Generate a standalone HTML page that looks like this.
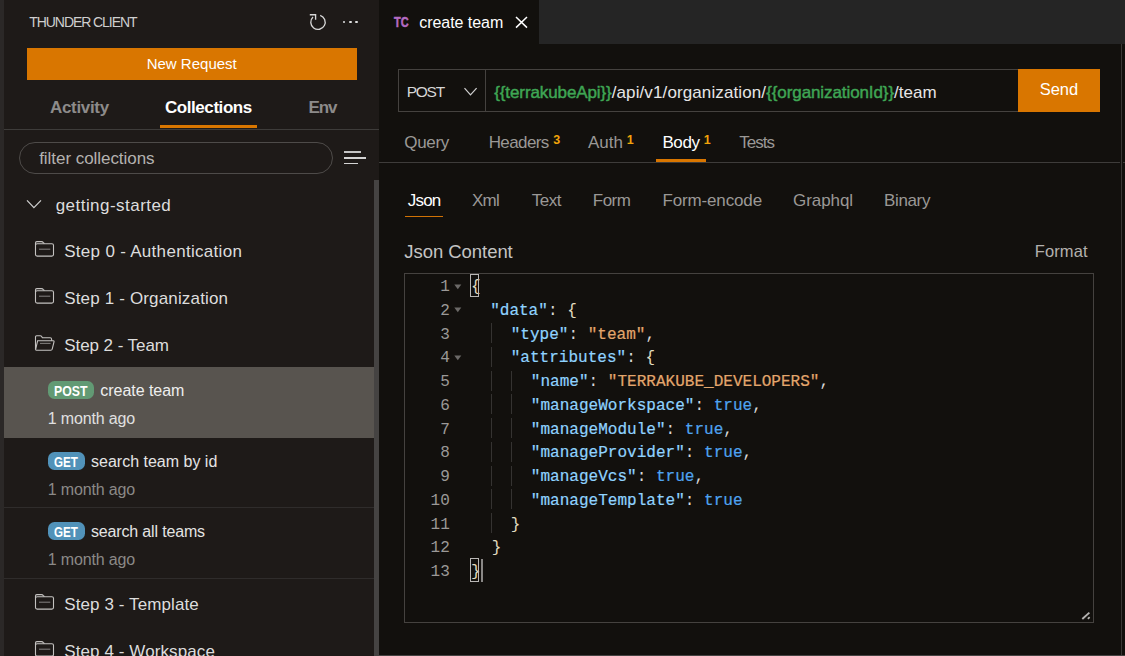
<!DOCTYPE html><html><head><meta charset="utf-8"><title>Thunder Client</title><style>html,body{margin:0;padding:0;background:#12100d;}body{width:1125px;height:656px;position:relative;overflow:hidden;font-family:"Liberation Sans", sans-serif;}body>div,body>span,body>svg{position:absolute;box-sizing:border-box;}span{white-space:pre;}</style></head><body>
<div style="left:0px;top:0px;width:4px;height:656px;background:#2b2827;"></div>
<div style="left:4px;top:0px;width:375px;height:656px;background:#1e1a18;"></div>
<div style="left:379px;top:0px;width:746px;height:656px;background:#12100d;"></div>
<div style="left:379px;top:0px;width:746px;height:44px;background:#252525;"></div>
<div style="left:379px;top:0px;width:160px;height:44px;background:#12100d;"></div>
<span style="left:29.30px;top:15px;font-size:14px;line-height:14px;color:#cfcfcf;letter-spacing:-1.07px;">THUNDER CLIENT</span>
<svg style="left:306px;top:10px" width="24" height="24" viewBox="0 0 24 24" fill="none" stroke="#d6d6d6" stroke-width="1.35"><path d="M7 7 A7.2 7.2 0 1 0 14.2 5.35"/><path d="M3.8 4.7 H9.6 V9.7"/></svg>
<div style="left:342.75px;top:20.65px;width:2.5px;height:2.5px;background:#e0e0e0;border-radius:50%;"></div>
<div style="left:349.15px;top:20.65px;width:2.5px;height:2.5px;background:#e0e0e0;border-radius:50%;"></div>
<div style="left:355.45px;top:20.65px;width:2.5px;height:2.5px;background:#e0e0e0;border-radius:50%;"></div>
<div style="left:27px;top:48px;width:330px;height:32px;background:#d97600;"></div>
<span style="left:146.70px;top:56px;font-size:15px;line-height:15px;color:#fff;">New Request</span>
<span style="left:50.00px;top:99px;font-size:17px;line-height:17px;color:#8d8b8a;font-weight:bold;letter-spacing:-0.32px;">Activity</span>
<span style="left:165.00px;top:99px;font-size:17px;line-height:17px;color:#ffffff;font-weight:bold;letter-spacing:-0.44px;">Collections</span>
<span style="left:308.60px;top:99px;font-size:17px;line-height:17px;color:#8d8b8a;font-weight:bold;letter-spacing:-1.2px;">Env</span>
<div style="left:160px;top:125px;width:97px;height:3px;background:#d97600;"></div>
<div style="left:4px;top:129px;width:375px;height:1px;background:#3e3c3a;"></div>
<div style="left:19px;top:141.6px;width:314px;height:32.4px;border:1px solid #4e4b49;border-radius:16.2px;"></div>
<span style="left:39.20px;top:150px;font-size:17px;line-height:17px;color:#b4b2b0;letter-spacing:-0.05px;">filter collections</span>
<div style="left:344.3px;top:151px;width:16.7px;height:2px;background:#c4c4c4;"></div>
<div style="left:344.3px;top:156.9px;width:21.4px;height:1.7px;background:#d4d4d4;"></div>
<div style="left:344.3px;top:162.6px;width:13.6px;height:1.7px;background:#d4d4d4;"></div>
<div style="left:374px;top:180px;width:5px;height:476px;background:#454342;"></div>
<svg style="left:25px;top:198px" width="18" height="12" viewBox="0 0 18 12" fill="none" stroke="#cfcfcf" stroke-width="1.25"><path d="M2 2.4 L8.9 9.6 L16 2.4"/></svg>
<span style="left:55.70px;top:197px;font-size:17px;line-height:17px;color:#dddddd;letter-spacing:0.46px;">getting-started</span>
<svg style="left:33px;top:239px" width="24" height="20" viewBox="0 0 24 20" fill="none" stroke="#c4c2c0" stroke-width="1.1"><rect x="2.5" y="4.7" width="18" height="12.4" rx="1.6"/><path d="M2.5 6 V3.9 Q2.5 2.6 3.8 2.6 H8.4 Q9.6 2.6 10.4 3.6 L11.4 4.7"/><path d="M6 10.2 H17.3" stroke="#7c7a78"/></svg>
<span style="left:64.20px;top:243px;font-size:17px;line-height:17px;color:#dddddd;letter-spacing:0.3px;">Step 0 - Authentication</span>
<svg style="left:33px;top:286px" width="24" height="20" viewBox="0 0 24 20" fill="none" stroke="#c4c2c0" stroke-width="1.1"><rect x="2.5" y="4.7" width="18" height="12.4" rx="1.6"/><path d="M2.5 6 V3.9 Q2.5 2.6 3.8 2.6 H8.4 Q9.6 2.6 10.4 3.6 L11.4 4.7"/><path d="M6 10.2 H17.3" stroke="#7c7a78"/></svg>
<span style="left:64.20px;top:290px;font-size:17px;line-height:17px;color:#dddddd;letter-spacing:0.16px;">Step 1 - Organization</span>
<svg style="left:33px;top:332.5px" width="24" height="20" viewBox="0 0 24 20" fill="none" stroke="#c4c2c0" stroke-width="1.1"><path d="M2.5 16.5 V3.8 Q2.5 2.8 3.6 2.8 H7.4 Q8.6 2.8 9.4 4.8 H17.2 Q18.6 4.8 18.6 6.2 V7.8" /><path d="M4.6 7.8 H20.4 Q21.2 7.8 21 8.8 L19.2 16.2 Q18.9 17.2 17.8 17.2 H3.4 Q2.4 17.2 2.7 16.2 Z" /><path d="M7 10.4 H17.6" stroke="#7c7a78"/></svg>
<span style="left:64.20px;top:337px;font-size:17px;line-height:17px;color:#dddddd;letter-spacing:-0.06px;">Step 2 - Team</span>
<div style="left:4px;top:367px;width:370px;height:71px;background:#58544f;"></div>
<div style="left:47.8px;top:381px;width:46.2px;height:18px;background:#629a74;border-radius:6.5px;"></div>
<span style="left:54.00px;top:384px;font-size:14px;line-height:14px;color:#ffffff;font-weight:bold;transform:scaleX(0.877);transform-origin:0 0;">POST</span>
<span style="left:100.30px;top:383px;font-size:16px;line-height:16px;color:#eeeeee;letter-spacing:-0.04px;">create team</span>
<span style="left:47.80px;top:411px;font-size:16px;line-height:16px;color:#e0e0e0;letter-spacing:-0.15px;">1 month ago</span>
<div style="left:47.8px;top:452px;width:37.2px;height:18px;background:#5192b9;border-radius:6.5px;"></div>
<span style="left:54.00px;top:455px;font-size:14px;line-height:14px;color:#ffffff;font-weight:bold;transform:scaleX(0.83);transform-origin:0 0;">GET</span>
<span style="left:91.00px;top:454px;font-size:16px;line-height:16px;color:#e4e4e4;">search team by id</span>
<span style="left:47.80px;top:482px;font-size:16px;line-height:16px;color:#8b8987;letter-spacing:-0.15px;">1 month ago</span>
<div style="left:4px;top:507px;width:370px;height:1px;background:#2f2c2b;"></div>
<div style="left:47.8px;top:522.4px;width:37.2px;height:18px;background:#5192b9;border-radius:6.5px;"></div>
<span style="left:54.00px;top:525px;font-size:14px;line-height:14px;color:#ffffff;font-weight:bold;transform:scaleX(0.83);transform-origin:0 0;">GET</span>
<span style="left:91.00px;top:524px;font-size:16px;line-height:16px;color:#e4e4e4;letter-spacing:-0.16px;">search all teams</span>
<span style="left:47.80px;top:552px;font-size:16px;line-height:16px;color:#8b8987;letter-spacing:-0.15px;">1 month ago</span>
<div style="left:4px;top:578px;width:370px;height:1px;background:#2f2c2b;"></div>
<svg style="left:33px;top:592px" width="24" height="20" viewBox="0 0 24 20" fill="none" stroke="#c4c2c0" stroke-width="1.1"><rect x="2.5" y="4.7" width="18" height="12.4" rx="1.6"/><path d="M2.5 6 V3.9 Q2.5 2.6 3.8 2.6 H8.4 Q9.6 2.6 10.4 3.6 L11.4 4.7"/><path d="M6 10.2 H17.3" stroke="#7c7a78"/></svg>
<span style="left:64.20px;top:596px;font-size:17px;line-height:17px;color:#dddddd;letter-spacing:0.1px;">Step 3 - Template</span>
<svg style="left:33px;top:639px" width="24" height="20" viewBox="0 0 24 20" fill="none" stroke="#c4c2c0" stroke-width="1.1"><rect x="2.5" y="4.7" width="18" height="12.4" rx="1.6"/><path d="M2.5 6 V3.9 Q2.5 2.6 3.8 2.6 H8.4 Q9.6 2.6 10.4 3.6 L11.4 4.7"/><path d="M6 10.2 H17.3" stroke="#7c7a78"/></svg>
<span style="left:64.20px;top:643px;font-size:17px;line-height:17px;color:#dddddd;letter-spacing:0.1px;">Step 4 - Workspace</span>
<span style="left:394.30px;top:15px;font-size:14px;line-height:14px;color:#b46bc2;font-weight:bold;transform:scaleX(0.78);transform-origin:0 0;-webkit-text-stroke:0.5px #b46bc2;">TC</span>
<span style="left:419.20px;top:15px;font-size:16px;line-height:16px;color:#ffffff;letter-spacing:-0.04px;">create team</span>
<svg style="left:514px;top:15px" width="15" height="15" viewBox="0 0 15 15" fill="none" stroke="#ffffff" stroke-width="1.5"><path d="M2 2 L13 12.6 M13 2 L2 12.6"/></svg>
<div style="left:1121px;top:44px;width:1px;height:612px;background:#3a3836;"></div>
<div style="left:398px;top:69px;width:621px;height:43px;border:1px solid #45423f;"></div>
<div style="left:485px;top:69px;width:1px;height:43px;background:#45423f;"></div>
<span style="left:406.80px;top:84px;font-size:15.5px;line-height:15.5px;color:#d6d6d6;letter-spacing:-1.3px;">POST</span>
<svg style="left:462px;top:86px" width="17" height="12" viewBox="0 0 17 12" fill="none" stroke="#cfcfcf" stroke-width="1.25"><path d="M2.5 2.1 L8.5 8.9 L14.6 2.1"/></svg>
<span style="left:494.20px;top:84px;font-size:17px;line-height:17px;color:#e6e6e6;"><span style="position:static;color:#3fa654;-webkit-text-stroke:0.45px #3fa654;letter-spacing:-0.1px">{{terrakubeApi}}</span><span style="position:static;letter-spacing:0.11px">/api/v1/organization/</span><span style="position:static;color:#3fa654;-webkit-text-stroke:0.45px #3fa654;letter-spacing:-0.09px">{{organizationId}}</span><span style="position:static">/team</span></span>
<div style="left:1018px;top:69px;width:82px;height:43px;background:#d97600;"></div>
<span style="left:1039.70px;top:81px;font-size:16.5px;line-height:16.5px;color:#ffffff;">Send</span>
<span style="left:404.30px;top:134px;font-size:17px;line-height:17px;color:#9a9896;letter-spacing:-0.34px;">Query</span>
<span style="left:488.70px;top:134px;font-size:17px;line-height:17px;color:#9a9896;letter-spacing:-0.6px;">Headers</span>
<span style="left:553.20px;top:134px;font-size:12.5px;line-height:12.5px;color:#f0a30a;font-weight:bold;">3</span>
<span style="left:588.00px;top:134px;font-size:17px;line-height:17px;color:#9a9896;">Auth</span>
<span style="left:626.80px;top:134px;font-size:12.5px;line-height:12.5px;color:#f0a30a;font-weight:bold;">1</span>
<span style="left:662.40px;top:134px;font-size:17px;line-height:17px;color:#ffffff;letter-spacing:-0.4px;">Body</span>
<span style="left:703.80px;top:134px;font-size:12.5px;line-height:12.5px;color:#f0a30a;font-weight:bold;">1</span>
<span style="left:739.30px;top:134px;font-size:17px;line-height:17px;color:#9a9896;letter-spacing:-1.0px;">Tests</span>
<div style="left:656px;top:159px;width:50px;height:3px;background:#d97600;"></div>
<div style="left:379px;top:162px;width:741px;height:1px;background:#3e3c3a;"></div>
<div style="left:1123px;top:162px;width:2px;height:1px;background:#3e3c3a;"></div>
<span style="left:407.80px;top:192px;font-size:17px;line-height:17px;color:#ffffff;letter-spacing:-0.8px;">Json</span>
<span style="left:472.00px;top:192px;font-size:17px;line-height:17px;color:#9a9896;letter-spacing:-0.75px;">Xml</span>
<span style="left:531.80px;top:192px;font-size:17px;line-height:17px;color:#9a9896;letter-spacing:-0.5px;">Text</span>
<span style="left:592.80px;top:192px;font-size:17px;line-height:17px;color:#9a9896;letter-spacing:-0.55px;">Form</span>
<span style="left:662.40px;top:192px;font-size:17px;line-height:17px;color:#9a9896;letter-spacing:-0.14px;">Form-encode</span>
<span style="left:793.00px;top:192px;font-size:17px;line-height:17px;color:#9a9896;letter-spacing:-0.07px;">Graphql</span>
<span style="left:884.00px;top:192px;font-size:17px;line-height:17px;color:#9a9896;letter-spacing:-0.36px;">Binary</span>
<div style="left:405px;top:215.8px;width:38px;height:1.5px;background:#d07205;"></div>
<span style="left:404.30px;top:243px;font-size:18.5px;line-height:18.5px;color:#c4c4c4;letter-spacing:-0.05px;">Json Content</span>
<span style="left:1034.80px;top:243px;font-size:16.5px;line-height:16.5px;color:#b2b0ae;letter-spacing:0.1px;">Format</span>
<div style="left:404px;top:273px;width:690px;height:350px;border:1px solid #45423f;"></div>
<span style="left:440.18px;top:279px;font-size:16.04px;line-height:16.04px;color:#9b9997;font-family:'Liberation Mono', monospace;">1</span>
<span style="left:471.00px;top:279px;font-size:16.04px;line-height:16.04px;color:#d8d8d8;font-family:'Liberation Mono', monospace;"><span style="position:static;color:#e2dcc0">{</span></span>
<svg style="left:454px;top:283.60px" width="8" height="6" viewBox="0 0 8 6"><path d="M0.3 0.5 H7.3 L3.8 5.2 Z" fill="#6b6967"/></svg>
<span style="left:440.18px;top:303px;font-size:16.04px;line-height:16.04px;color:#9b9997;font-family:'Liberation Mono', monospace;">2</span>
<span style="left:490.15px;top:303px;font-size:16.04px;line-height:16.04px;color:#d8d8d8;font-family:'Liberation Mono', monospace;"><span style="position:static;color:#8fd3ff;-webkit-text-stroke:0.2px #8fd3ff">"data"</span><span style="position:static;color:#d8d8d8">: </span><span style="position:static;color:#e2dcc0">{</span></span>
<svg style="left:454px;top:307.35px" width="8" height="6" viewBox="0 0 8 6"><path d="M0.3 0.5 H7.3 L3.8 5.2 Z" fill="#6b6967"/></svg>
<span style="left:440.18px;top:327px;font-size:16.04px;line-height:16.04px;color:#9b9997;font-family:'Liberation Mono', monospace;">3</span>
<span style="left:510.70px;top:327px;font-size:16.04px;line-height:16.04px;color:#d8d8d8;font-family:'Liberation Mono', monospace;"><span style="position:static;color:#8fd3ff;-webkit-text-stroke:0.2px #8fd3ff">"type"</span><span style="position:static;color:#d8d8d8">: </span><span style="position:static;color:#e3a66c;-webkit-text-stroke:0.2px #e3a66c">"team"</span><span style="position:static;color:#d8d8d8">,</span></span>
<div style="left:491px;top:323px;width:1px;height:20px;background:#353331;"></div>
<span style="left:440.18px;top:350px;font-size:16.04px;line-height:16.04px;color:#9b9997;font-family:'Liberation Mono', monospace;">4</span>
<span style="left:510.70px;top:350px;font-size:16.04px;line-height:16.04px;color:#d8d8d8;font-family:'Liberation Mono', monospace;"><span style="position:static;color:#8fd3ff;-webkit-text-stroke:0.2px #8fd3ff">"attributes"</span><span style="position:static;color:#d8d8d8">: </span><span style="position:static;color:#e2dcc0">{</span></span>
<svg style="left:454px;top:354.85px" width="8" height="6" viewBox="0 0 8 6"><path d="M0.3 0.5 H7.3 L3.8 5.2 Z" fill="#6b6967"/></svg>
<div style="left:491px;top:347px;width:1px;height:20px;background:#353331;"></div>
<span style="left:440.18px;top:374px;font-size:16.04px;line-height:16.04px;color:#9b9997;font-family:'Liberation Mono', monospace;">5</span>
<span style="left:530.85px;top:374px;font-size:16.04px;line-height:16.04px;color:#d8d8d8;font-family:'Liberation Mono', monospace;"><span style="position:static;color:#8fd3ff;-webkit-text-stroke:0.2px #8fd3ff">"name"</span><span style="position:static;color:#d8d8d8">: </span><span style="position:static;color:#e3a66c;-webkit-text-stroke:0.2px #e3a66c">"TERRAKUBE_DEVELOPERS"</span><span style="position:static;color:#d8d8d8">,</span></span>
<div style="left:491px;top:371px;width:1px;height:20px;background:#353331;"></div>
<div style="left:511px;top:371px;width:1px;height:20px;background:#353331;"></div>
<span style="left:440.18px;top:398px;font-size:16.04px;line-height:16.04px;color:#9b9997;font-family:'Liberation Mono', monospace;">6</span>
<span style="left:530.85px;top:398px;font-size:16.04px;line-height:16.04px;color:#d8d8d8;font-family:'Liberation Mono', monospace;"><span style="position:static;color:#8fd3ff;-webkit-text-stroke:0.2px #8fd3ff">"manageWorkspace"</span><span style="position:static;color:#d8d8d8">: </span><span style="position:static;color:#4fa3f0;-webkit-text-stroke:0.2px #4fa3f0">true</span><span style="position:static;color:#d8d8d8">,</span></span>
<div style="left:491px;top:394px;width:1px;height:20px;background:#353331;"></div>
<div style="left:511px;top:394px;width:1px;height:20px;background:#353331;"></div>
<span style="left:440.18px;top:422px;font-size:16.04px;line-height:16.04px;color:#9b9997;font-family:'Liberation Mono', monospace;">7</span>
<span style="left:530.85px;top:422px;font-size:16.04px;line-height:16.04px;color:#d8d8d8;font-family:'Liberation Mono', monospace;"><span style="position:static;color:#8fd3ff;-webkit-text-stroke:0.2px #8fd3ff">"manageModule"</span><span style="position:static;color:#d8d8d8">: </span><span style="position:static;color:#4fa3f0;-webkit-text-stroke:0.2px #4fa3f0">true</span><span style="position:static;color:#d8d8d8">,</span></span>
<div style="left:491px;top:418px;width:1px;height:20px;background:#353331;"></div>
<div style="left:511px;top:418px;width:1px;height:20px;background:#353331;"></div>
<span style="left:440.18px;top:445px;font-size:16.04px;line-height:16.04px;color:#9b9997;font-family:'Liberation Mono', monospace;">8</span>
<span style="left:530.85px;top:445px;font-size:16.04px;line-height:16.04px;color:#d8d8d8;font-family:'Liberation Mono', monospace;"><span style="position:static;color:#8fd3ff;-webkit-text-stroke:0.2px #8fd3ff">"manageProvider"</span><span style="position:static;color:#d8d8d8">: </span><span style="position:static;color:#4fa3f0;-webkit-text-stroke:0.2px #4fa3f0">true</span><span style="position:static;color:#d8d8d8">,</span></span>
<div style="left:491px;top:442px;width:1px;height:20px;background:#353331;"></div>
<div style="left:511px;top:442px;width:1px;height:20px;background:#353331;"></div>
<span style="left:440.18px;top:469px;font-size:16.04px;line-height:16.04px;color:#9b9997;font-family:'Liberation Mono', monospace;">9</span>
<span style="left:530.85px;top:469px;font-size:16.04px;line-height:16.04px;color:#d8d8d8;font-family:'Liberation Mono', monospace;"><span style="position:static;color:#8fd3ff;-webkit-text-stroke:0.2px #8fd3ff">"manageVcs"</span><span style="position:static;color:#d8d8d8">: </span><span style="position:static;color:#4fa3f0;-webkit-text-stroke:0.2px #4fa3f0">true</span><span style="position:static;color:#d8d8d8">,</span></span>
<div style="left:491px;top:466px;width:1px;height:20px;background:#353331;"></div>
<div style="left:511px;top:466px;width:1px;height:20px;background:#353331;"></div>
<span style="left:430.55px;top:493px;font-size:16.04px;line-height:16.04px;color:#9b9997;font-family:'Liberation Mono', monospace;">10</span>
<span style="left:530.85px;top:493px;font-size:16.04px;line-height:16.04px;color:#d8d8d8;font-family:'Liberation Mono', monospace;"><span style="position:static;color:#8fd3ff;-webkit-text-stroke:0.2px #8fd3ff">"manageTemplate"</span><span style="position:static;color:#d8d8d8">: </span><span style="position:static;color:#4fa3f0;-webkit-text-stroke:0.2px #4fa3f0">true</span></span>
<div style="left:491px;top:489px;width:1px;height:20px;background:#353331;"></div>
<div style="left:511px;top:489px;width:1px;height:20px;background:#353331;"></div>
<span style="left:430.55px;top:517px;font-size:16.04px;line-height:16.04px;color:#9b9997;font-family:'Liberation Mono', monospace;">11</span>
<span style="left:510.70px;top:517px;font-size:16.04px;line-height:16.04px;color:#d8d8d8;font-family:'Liberation Mono', monospace;"><span style="position:static;color:#e2dcc0">}</span></span>
<div style="left:491px;top:513px;width:1px;height:20px;background:#353331;"></div>
<span style="left:430.55px;top:540px;font-size:16.04px;line-height:16.04px;color:#9b9997;font-family:'Liberation Mono', monospace;">12</span>
<span style="left:491.65px;top:540px;font-size:16.04px;line-height:16.04px;color:#d8d8d8;font-family:'Liberation Mono', monospace;"><span style="position:static;color:#e2dcc0">}</span></span>
<span style="left:430.55px;top:564px;font-size:16.04px;line-height:16.04px;color:#9b9997;font-family:'Liberation Mono', monospace;">13</span>
<span style="left:471.00px;top:564px;font-size:16.04px;line-height:16.04px;color:#d8d8d8;font-family:'Liberation Mono', monospace;"><span style="position:static;color:#e2dcc0">}</span></span>
<div style="left:470px;top:274px;width:9px;height:23.4px;border:1px solid #b9b7b5;"></div>
<div style="left:470px;top:558px;width:9.4px;height:24px;border:1px solid #b9b7b5;"></div>
<div style="left:481.4px;top:559px;width:1.2px;height:23px;background:#8a8886;"></div>
<svg style="left:1080px;top:610px" width="12" height="12" viewBox="0 0 12 12" stroke="#b5b3b1" stroke-width="1.9" fill="none"><path d="M2.3 9 L9.4 2.6"/><path d="M7.9 8.8 L9.6 7.2" stroke-width="1.8"/></svg>
<div style="left:374px;top:655px;width:751px;height:1px;background:#454342;"></div>
</body></html>
